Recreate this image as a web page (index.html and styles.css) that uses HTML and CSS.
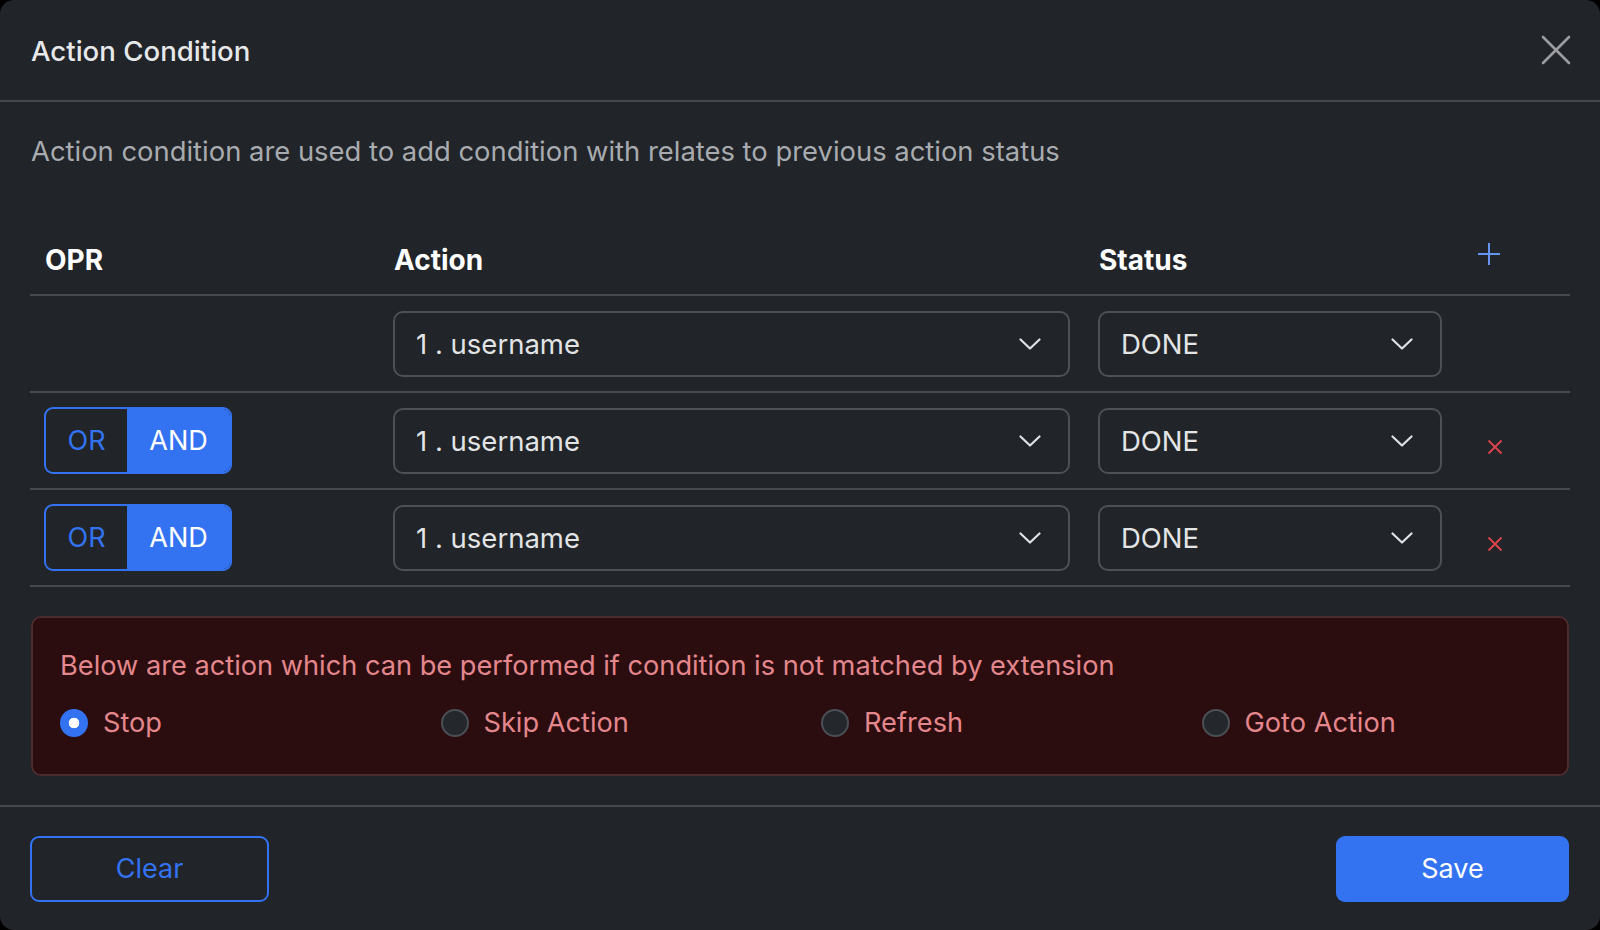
FILE: index.html
```html
<!DOCTYPE html>
<html lang="en">
<head>
<meta charset="utf-8">
<title>Action Condition</title>
<link rel="stylesheet" href="styles.css">
</head>
<body>
<div class="modal">
  <div class="modal-header">
    <h1 class="modal-title">Action Condition</h1>
    <button class="close-btn" aria-label="Close">
      <svg width="30" height="30" viewBox="0 0 30 30"><path d="M2 2 L28 28 M28 2 L2 28" stroke="#9b9da0" stroke-width="2.6" stroke-linecap="round" fill="none"/></svg>
    </button>
  </div>
  <div class="modal-body">
    <p class="desc">Action condition are used to add condition with relates to previous action status</p>
    <div class="cond-table">
      <div class="row head">
        <div class="cell">OPR</div>
        <div class="cell">Action</div>
        <div class="cell">Status</div>
        <div class="cell ctl">
          <svg class="plus" width="24" height="24" viewBox="0 0 24 24"><path d="M12 1 V23 M1 12 H23" stroke="#6595ef" stroke-width="2" fill="none"/></svg>
        </div>
      </div>
      <div class="row">
        <div class="cell"></div>
        <div class="cell"><div class="select"><span>1 . username</span><svg class="chev" width="22" height="12" viewBox="0 0 22 12"><path d="M1.5 1.5 L11 10.5 L20.5 1.5" stroke="#dee2e6" stroke-width="2.2" fill="none" stroke-linecap="round" stroke-linejoin="round"/></svg></div></div>
        <div class="cell"><div class="select"><span>DONE</span><svg class="chev" width="22" height="12" viewBox="0 0 22 12"><path d="M1.5 1.5 L11 10.5 L20.5 1.5" stroke="#dee2e6" stroke-width="2.2" fill="none" stroke-linecap="round" stroke-linejoin="round"/></svg></div></div>
        <div class="cell ctl"></div>
      </div>
      <div class="row">
        <div class="cell"><div class="toggle"><span class="opt">OR</span><span class="opt on">AND</span></div></div>
        <div class="cell"><div class="select"><span>1 . username</span><svg class="chev" width="22" height="12" viewBox="0 0 22 12"><path d="M1.5 1.5 L11 10.5 L20.5 1.5" stroke="#dee2e6" stroke-width="2.2" fill="none" stroke-linecap="round" stroke-linejoin="round"/></svg></div></div>
        <div class="cell"><div class="select"><span>DONE</span><svg class="chev" width="22" height="12" viewBox="0 0 22 12"><path d="M1.5 1.5 L11 10.5 L20.5 1.5" stroke="#dee2e6" stroke-width="2.2" fill="none" stroke-linecap="round" stroke-linejoin="round"/></svg></div></div>
        <div class="cell ctl"><svg class="del" width="16" height="16" viewBox="0 0 16 16"><path d="M1.5 1.5 L14.5 14.5 M14.5 1.5 L1.5 14.5" stroke="#d8434c" stroke-width="2" fill="none"/></svg></div>
      </div>
      <div class="row">
        <div class="cell"><div class="toggle"><span class="opt">OR</span><span class="opt on">AND</span></div></div>
        <div class="cell"><div class="select"><span>1 . username</span><svg class="chev" width="22" height="12" viewBox="0 0 22 12"><path d="M1.5 1.5 L11 10.5 L20.5 1.5" stroke="#dee2e6" stroke-width="2.2" fill="none" stroke-linecap="round" stroke-linejoin="round"/></svg></div></div>
        <div class="cell"><div class="select"><span>DONE</span><svg class="chev" width="22" height="12" viewBox="0 0 22 12"><path d="M1.5 1.5 L11 10.5 L20.5 1.5" stroke="#dee2e6" stroke-width="2.2" fill="none" stroke-linecap="round" stroke-linejoin="round"/></svg></div></div>
        <div class="cell ctl"><svg class="del" width="16" height="16" viewBox="0 0 16 16"><path d="M1.5 1.5 L14.5 14.5 M14.5 1.5 L1.5 14.5" stroke="#d8434c" stroke-width="2" fill="none"/></svg></div>
      </div>
    </div>
    <div class="alert">
      <p class="alert-text">Below are action which can be performed if condition is not matched by extension</p>
      <div class="radios">
        <label class="radio"><span class="dot checked"></span>Stop</label>
        <label class="radio"><span class="dot"></span>Skip Action</label>
        <label class="radio"><span class="dot"></span>Refresh</label>
        <label class="radio"><span class="dot"></span>Goto Action</label>
      </div>
    </div>
  </div>
  <div class="modal-footer">
    <button class="btn btn-outline">Clear</button>
    <button class="btn btn-primary">Save</button>
  </div>
</div>
</body>
</html>
```

FILE: styles.css
```css
* { box-sizing: border-box; }
html, body { margin: 0; padding: 0; background: #000; }
body {
  font-family: Inter, "Noto Sans", "Liberation Sans", sans-serif;
  color: #dee2e6;
}
.modal {
  width: 1600px;
  height: 930px;
  background: #212428;
  border-radius: 14px;
  display: flex;
  flex-direction: column;
  overflow: hidden;
}
.modal-header {
  height: 102px;
  flex: none;
  border-bottom: 2px solid #45484d;
  display: flex;
  align-items: center;
  justify-content: space-between;
  padding: 0 30px 0 31px;
}
.modal-title {
  margin: 2px 0 0 0;
  font-size: 27.6px;
  font-weight: 500;
  color: #e6e8ea;
}
.close-btn {
  background: none;
  border: 0;
  padding: 0;
  width: 30px;
  height: 30px;
  margin-top: 0;
  margin-right: -1px;
}
.close-btn svg { display: block; }
.modal-body {
  flex: 1;
  padding: 0 30px;
}
.desc {
  margin: 29px 0 0 1px;
  font-size: 27.4px;
  line-height: 40px;
  color: #a8abaf;
}
.cond-table {
  margin-top: 52px;
}
.row {
  display: grid;
  grid-template-columns: 349px 705px 372px 114px;
  border-bottom: 2px solid #474a4f;
  height: 97px;
  align-items: center;
}
.row.head {
  height: 73px;
  align-items: start;
  padding-top: 20px;
  font-size: 28px;
  font-weight: 700;
  color: #fff;
}
.cell { padding: 0 14px; }
.row.head .cell { padding-left: 15px; }
.ctl { padding-left: 21px; }
.plus { display: block; margin-top: -1px; margin-left: 6px; }
.del { display: block; margin-left: 10px; margin-top: 13px; }
.select {
  height: 66px;
  border: 2px solid #4d5055;
  border-radius: 10px;
  display: flex;
  align-items: center;
  justify-content: space-between;
  padding: 0 27px 0 21px;
  font-size: 27.5px;
  color: #e2e4e6;
}
.chev { display: block; }
.toggle {
  width: 188px;
  height: 67px;
  border: 2px solid #3373f1;
  border-radius: 9px;
  display: flex;
  overflow: hidden;
  font-size: 27px;
}
.opt {
  display: flex;
  align-items: center;
  justify-content: center;
  width: 81px;
  color: #3373f1;
}
.opt.on {
  flex: 1;
  background: #3373f1;
  color: #fff;
}
.alert {
  margin-top: 29px;
  margin-left: 1px;
  margin-right: 1px;
  height: 160px;
  background: #2b0d0f;
  border: 2px solid #4c2b2e;
  border-radius: 10px;
  padding: 30px 0 0 27px;
  color: #e4878d;
  font-size: 27.2px;
}
.alert-text {
  margin: 0;
  line-height: 36px;
}
.radios {
  display: grid;
  grid-template-columns: repeat(4, 380.5px);
  margin-top: 21px;
}
.radio {
  display: flex;
  align-items: center;
  gap: 15px;
  line-height: 36px;
}
.dot {
  width: 28px;
  height: 28px;
  border-radius: 50%;
  border: 2px solid #4a4f55;
  background: #24272b;
  display: inline-block;
}
.dot.checked {
  background: #3373f1 radial-gradient(circle, #fff 0 5px, transparent 5.6px);
  border-color: #3373f1;
}
.modal-footer {
  border-top: 2px solid #45484d;
  height: 125px;
  flex: none;
  display: flex;
  align-items: center;
  justify-content: space-between;
  padding: 0 31px 0 30px;
}
.btn {
  height: 66px;
  border-radius: 9px;
  font-family: inherit;
  font-size: 27px;
}
.btn-outline {
  width: 239px;
  background: transparent;
  border: 2px solid #3373f1;
  color: #3373f1;
}
.btn-primary {
  width: 233px;
  background: #3373f1;
  border: 0;
  color: #fff;
}
```
